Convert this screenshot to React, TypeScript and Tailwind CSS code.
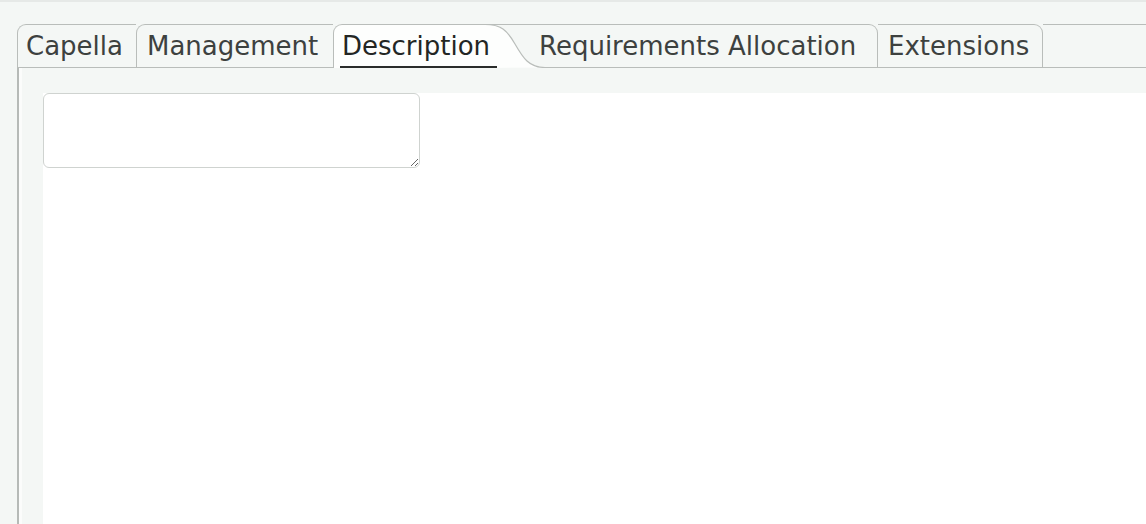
import React from "react";

const tabText = "relative z-20 text-[26px] leading-[30px] text-[#3d413f] whitespace-nowrap";

export default function App() {
  return (
    <div className="w-[1146px] h-[524px] overflow-hidden bg-[#f4f7f5] border-t-2 border-[#e6e9e7] flex flex-col font-['DejaVu_Sans',sans-serif]">
      {/* Tab strip */}
      <div className="mt-[22px] flex pl-[17px] h-[44px] shrink-0">
        <div className="w-[119px] border-l border-t border-b border-[#b9bdba] rounded-tl-[9px] pl-[8px] pt-[6px]">
          <span className={tabText}>Capella</span>
        </div>
        <div className="w-[197px] border-l border-t border-b border-[#b9bdba] rounded-tl-[9px] pl-[10px] pt-[6px]">
          <span className={tabText}>Management</span>
        </div>
        <div className="relative w-[164px] bg-[#fdfefd] border-l border-t border-[#b9bdba] rounded-tl-[9px] pl-[8px] pt-[6px]">
          <span className="relative z-20 text-[26px] leading-[30px] text-[#232624] whitespace-nowrap">Description</span>
          <div className="absolute z-20 left-[6px] right-0 bottom-0 h-[2px] bg-[#2a2c2b]" />
          <svg
            className="absolute z-10 top-[-1px] left-[151px]"
            width="62"
            height="44"
            viewBox="0 0 62 44"
          >
            <rect x="0" y="0" width="62" height="44" fill="#f4f7f5" />
            <path d="M0 0 C16 0 22 6 30 20 C38 34 44 43.5 60 43.5 L0 44 Z" fill="#fdfefd" />
            <line x1="0" y1="0.5" x2="62" y2="0.5" stroke="#b9bdba" strokeWidth="1" />
            <path d="M0 0.5 C16 0.5 22 6 30 20 C38 34 44 43.5 60 43.5 L62 43.5" fill="none" stroke="#b9bdba" strokeWidth="1.2" />
          </svg>
        </div>
        <div className="w-[381px] border-t border-b border-r border-[#b9bdba] rounded-tr-[9px] pl-[42px] pt-[6px]">
          <span className={tabText}>Requirements Allocation</span>
        </div>
        <div className="w-[165px] border-t border-b border-r border-[#b9bdba] rounded-tr-[9px] pl-[10px] pt-[6px]">
          <span className={tabText}>Extensions</span>
        </div>
        <div className="flex-1 border-t border-b border-[#b9bdba]" />
      </div>

      {/* Tab body */}
      <div className="flex-1 ml-[17px] border-l-2 border-[#b6bab7] flex">
        <div className="flex-1 border-l-[3px] border-[#fbfcfb] pl-[21px] pt-[25px] flex">
          <div className="flex-1 bg-white">
            <textarea className="block w-[377px] h-[75px] bg-white border border-[#cfd3d0] rounded-[6px] outline-none" />
          </div>
        </div>
      </div>
    </div>
  );
}
